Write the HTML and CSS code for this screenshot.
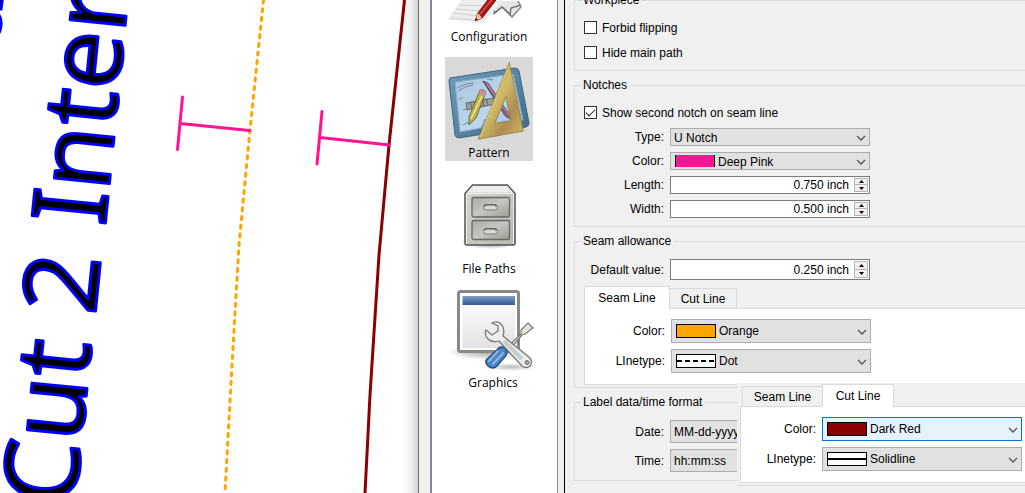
FILE: index.html
```html
<!DOCTYPE html>
<html lang="en">
<head>
<meta charset="utf-8">
<title>Pattern preferences</title>
<link rel="stylesheet" href="styles.css">
</head>
<body>
<svg class="defs" width="0" height="0" aria-hidden="true">
  <defs>
    <symbol id="chevron" viewBox="0 0 10 6"><path d="M1 1l4 4 4-4" fill="none" stroke="#555" stroke-width="1.3"/></symbol>
    <symbol id="up" viewBox="0 0 5 3"><path d="M0 3L2.500 0 5 3z" fill="#000"/></symbol>
    <symbol id="down" viewBox="0 0 5 3"><path d="M0 0L2.500 3 5 0z" fill="#000"/></symbol>
  </defs>
</svg>
<main class="app">
  <section class="canvas" aria-label="Pattern piece">
    <svg class="drawing" width="418" height="493" viewBox="0 0 418 493">
      <g class="piece-label">
        <text transform="translate(75 508) rotate(-84.3)">Cut</text>
        <text transform="translate(95 316) rotate(-84.3)">2</text>
        <text transform="translate(105 227) rotate(-84.3)">Inter</text>
      </g>
      <path d="M-4 -2H2.500L1 9H-4M-2 14C3 19 1 29-1 33" fill="#000" stroke="#00f" stroke-width="3"/>
      <path d="M263.500 0L250 130 239 245 232 365 225 493" fill="none" stroke="#ffa500" stroke-width="3" stroke-dasharray="3.200 5.500" stroke-linecap="round"/>
      <path d="M404.500 0L389 145 379 255 370 395 365 493" fill="none" stroke="#8b0000" stroke-width="3"/>
      <path d="M182.500 97L177.500 149.500M180 123.500L249.500 130.500M322 111.500L317 164M320 137.500L389.500 145" fill="none" stroke="#ff1493" stroke-width="3" stroke-linecap="round"/>
    </svg>
  </section>

  <nav class="sidebar" aria-label="Preference pages">
    <a class="page" href="#configuration">
      <svg width="88" height="86" viewBox="0 0 88 86">
        <path d="M43 60L50 72 57 66 64 72 67 76 76 66 73 60" fill="#e5e5e5" stroke="#888" stroke-width="1.500"/>
        <path d="M48 73L57 66 65 74 66 67 76 64" fill="none" stroke="#777" stroke-width="1.500"/>
        <path d="M14 62L3 79Q20 79 36 83L57 61V55H20z" fill="#eee"/>
        <path d="M14 64L40 65M11 68L37 70M8 72L34 75M5 77L29 79" stroke="#ccd0d4" fill="none"/>
        <path d="M30 80L33 72 46 55H54L37 77z" fill="#a81a1a" stroke="#700" stroke-width="1"/>
        <path d="M30 80L33 72 37 77z" fill="#e8c9a0"/><path d="M30 80L31 77 33 78.500z" fill="#222"/>
        <path d="M35 73L50 55" stroke="#e14b42" stroke-width="1.500"/>
      </svg>
      <span>Configuration</span>
    </a>
    <a class="page selected" href="#pattern" aria-current="page">
      <svg width="88" height="86" viewBox="0 0 88 86">
        <defs>
          <linearGradient id="board" x1="0" y1="0" x2="1" y2="1"><stop offset="0" stop-color="#6f9dbd"/><stop offset="1" stop-color="#416a88"/></linearGradient>
          <linearGradient id="sheet" x1="0" y1="0" x2="1" y2="1"><stop offset="0" stop-color="#a9c4dc"/><stop offset=".6" stop-color="#bdd8ee"/><stop offset="1" stop-color="#8cb8da"/></linearGradient>
          <linearGradient id="brass" x1="0" y1="0" x2="1" y2="1"><stop offset="0" stop-color="#b99b45"/><stop offset=".45" stop-color="#d3bb68"/><stop offset=".7" stop-color="#ae8d50"/><stop offset="1" stop-color="#d2b968"/></linearGradient>
        </defs>
        <path d="M5 21L70 11Q73 11 74 14L84 66Q84 69 81 70L14 81Q11 81 10 78L4 24Q4 22 5 21z" fill="url(#board)" stroke="#3d647f"/>
        <path d="M10 25L68 17 78 63 15 75z" fill="url(#sheet)" stroke="#82abc8"/>
        <path d="M12 31Q20 26 29 26M13 34Q20 29 28 28M42 22L48 23M14 43L18 40M18 53L37 47M18 68L31 61M35 75L40 62" stroke="#526b7c" stroke-width=".7" fill="none"/>
        <path d="M21 46L49 41 50 47 22 53z" fill="#9e9e97" stroke="#4b5454" stroke-width=".8"/>
        <path d="M25 45l2 7m2-8 2 7m2-8 2 7m2-8 2 7m2-8 2 7" stroke="#4d5554" stroke-width=".7"/>
        <path d="M38 24L43 26 64 57 65 62 60 59z" fill="#b97a8e" stroke="#454b65" stroke-width=".8"/>
        <path d="M38 24L63 60" stroke="#374266"/>
        <path d="M35 33Q39 31 41 35L31 61 24 68 24 60z" fill="#c1b24e" stroke="#58552d" stroke-width=".8"/>
        <path d="M35 33Q39 31 41 35L40 39 34 36z" fill="#c88c9e"/>
        <path d="M37 39L26 62" stroke="#eee58e" stroke-width="1.500"/>
        <path d="M64.300 5.300L33.300 82.300 78.300 74zM61 39.700L65.700 63.700 50 66.300z" fill="url(#brass)" fill-rule="evenodd" stroke="#8e7b3b" stroke-width=".8"/>
        <path d="M64 8L35 80" stroke="#e3d28c" stroke-width=".8"/>
      </svg>
      <span>Pattern</span>
    </a>
    <a class="page" href="#file-paths">
      <svg width="88" height="86" viewBox="0 0 88 86">
        <defs>
          <linearGradient id="steel" x1="0" y1="0" x2="1" y2="1"><stop offset="0" stop-color="#d5d8d0"/><stop offset="1" stop-color="#b7bab2"/></linearGradient>
          <linearGradient id="drawer" x1="0" y1="0" x2="1" y2="1"><stop offset="0" stop-color="#a9aca4"/><stop offset=".5" stop-color="#c4c7bf"/><stop offset="1" stop-color="#989c92"/></linearGradient>
          <radialGradient id="shade"><stop offset="0" stop-color="#777"/><stop offset="1" stop-color="#777" stop-opacity="0"/></radialGradient>
        </defs>
        <ellipse cx="45" cy="69" rx="29" ry="7" fill="url(#shade)"/>
        <path d="M27.500 12H62.500L70 20.500V70.500Q70 72 68.500 72H21.500Q20 72 20 70.500V20.500z" fill="url(#steel)" stroke="#555753" stroke-width="1.500"/>
        <path d="M28 13H62L68 19.500H22z" fill="#eeeeec"/>
        <path d="M21.500 71V20.500H68.500V71" fill="none" stroke="#eeeeec"/>
        <g fill="url(#drawer)" stroke="#666a62" stroke-width="1.300"><rect x="27" y="24.500" width="37.500" height="19.500" rx="1.500"/><rect x="27" y="47.500" width="37.500" height="19" rx="1.500"/></g>
        <g fill="#d8dad4" stroke="#777b72"><rect x="38.500" y="31.500" width="14" height="5.500" rx="2.500"/><rect x="38.500" y="55.500" width="14" height="5.500" rx="2.500"/></g>
        <path d="M40 34V32H51V34M40 58V56H51V58" fill="none" stroke="#555953"/>
      </svg>
      <span>File Paths</span>
    </a>
    <a class="page wide" href="#graphics">
      <svg width="96" height="84" viewBox="0 2 96 84">
        <defs>
          <linearGradient id="win" x2="0" y2="1"><stop offset="0" stop-color="#fff"/><stop offset="1" stop-color="#e2e2e2"/></linearGradient>
          <linearGradient id="bar" x2="0" y2="1"><stop offset="0" stop-color="#7f9dc6"/><stop offset="1" stop-color="#345b96"/></linearGradient>
        </defs>
        <ellipse cx="42" cy="65" rx="39" ry="8" fill="url(#shade)" opacity=".65"/>
        <ellipse cx="66" cy="80" rx="26" ry="4" fill="url(#shade)" opacity=".5"/>
        <rect x="13.500" y="4.500" width="60" height="60" rx="2" fill="#fff" stroke="#888a85" stroke-width="3"/>
        <rect x="17.500" y="9" width="52.500" height="52" fill="url(#win)"/>
        <rect x="17.500" y="9" width="52.500" height="9" fill="url(#bar)"/>
        <path d="M56 66L76 47 76 43 83 36 88 41 80 47 77 48 59 69z" fill="#e4e5df" stroke="#777972" stroke-width="1.200"/>
        <path d="M51 64Q55 58 60 61L62 65Q62 68 58 72L52 79Q48 83 43 79 39 75 42 72z" fill="#4a83c8" stroke="#204a87" stroke-width="1.300"/>
        <path d="M53 64L44 74M58 66L48 77" stroke="#91b5df" stroke-width="2" stroke-linecap="round"/>
        <path d="M47 36Q53 33 57 38 60 43 58 49L85 71Q88 75 85 79 81 82 77 79L54 54Q47 56 43 52 39 48 41 43L47 48 53 44 53 39z" fill="#eeeeec" stroke="#777972" stroke-width="1.300"/>
        <path d="M59 54L77 72" stroke="#c4cdd2" stroke-width="4"/>
        <circle cx="82" cy="75.500" r="2" fill="#aaa" stroke="#666"/>
      </svg>
      <span>Graphics</span>
    </a>
  </nav>

  <form class="settings">
    <fieldset class="group">
      <legend>Workpiece</legend>
      <div class="checks">
        <label class="check"><input type="checkbox">Forbid flipping</label>
        <label class="check"><input type="checkbox">Hide main path</label>
      </div>
    </fieldset>

    <fieldset class="group notches">
      <legend>Notches</legend>
      <div class="checks"><label class="check"><input type="checkbox" checked>Show second notch on seam line</label></div>
      <div class="rows compact">
        <label for="type">Type:</label>
        <div class="combo"><select id="type"><option>U Notch</option></select><svg class="chevron"><use href="#chevron"/></svg></div>
        <label for="notch-color">Color:</label>
        <div class="combo sampled"><select id="notch-color"><option>Deep Pink</option></select><span class="swatch pink"></span><svg class="chevron"><use href="#chevron"/></svg></div>
        <label for="length">Length:</label>
        <div class="spin"><input id="length" type="text" value="0.750 inch"><div class="steps"><button type="button" aria-label="Increase length"><svg><use href="#up"/></svg></button><button type="button" aria-label="Decrease length"><svg><use href="#down"/></svg></button></div></div>
        <label for="width">Width:</label>
        <div class="spin"><input id="width" type="text" value="0.500 inch"><div class="steps"><button type="button" aria-label="Increase width"><svg><use href="#up"/></svg></button><button type="button" aria-label="Decrease width"><svg><use href="#down"/></svg></button></div></div>
      </div>
    </fieldset>

    <fieldset class="group allowance">
      <legend>Seam allowance</legend>
      <div class="rows default">
        <label for="default">Default value:</label>
        <div class="spin"><input id="default" type="text" value="0.250 inch"><div class="steps"><button type="button" aria-label="Increase default value"><svg><use href="#up"/></svg></button><button type="button" aria-label="Decrease default value"><svg><use href="#down"/></svg></button></div></div>
      </div>
      <div class="tabs" role="tablist">
        <button class="tab active" type="button" role="tab" aria-selected="true">Seam Line</button>
        <button class="tab" type="button" role="tab" aria-selected="false">Cut Line</button>
      </div>
      <div class="pane rows" role="tabpanel">
        <label for="seam-color">Color:</label>
        <div class="combo sampled"><select id="seam-color"><option>Orange</option></select><span class="swatch orange"></span><svg class="chevron"><use href="#chevron"/></svg></div>
        <label for="seam-type">LInetype:</label>
        <div class="combo sampled"><select id="seam-type"><option>Dot</option></select><span class="swatch dotted"></span><svg class="chevron"><use href="#chevron"/></svg></div>
      </div>
    </fieldset>

    <fieldset class="group formats">
      <legend>Label data/time format</legend>
      <div class="rows medium">
        <label for="date">Date:</label>
        <div class="combo"><select id="date"><option>MM-dd-yyyy</option></select></div>
        <label for="time">Time:</label>
        <div class="combo"><select id="time"><option>hh:mm:ss</option></select></div>
      </div>
    </fieldset>

    <section class="inset" aria-label="Cut line settings">
      <div class="tabs" role="tablist">
        <button class="tab first" type="button" role="tab" aria-selected="false">Seam Line</button>
        <button class="tab active" type="button" role="tab" aria-selected="true">Cut Line</button>
      </div>
      <div class="pane rows" role="tabpanel">
        <label for="cut-color">Color:</label>
        <div class="combo sampled focused"><select id="cut-color"><option>Dark Red</option></select><span class="swatch red"></span><svg class="chevron"><use href="#chevron"/></svg></div>
        <label for="cut-type">LInetype:</label>
        <div class="combo sampled"><select id="cut-type"><option>Solidline</option></select><span class="swatch solid"></span><svg class="chevron"><use href="#chevron"/></svg></div>
      </div>
    </section>
  </form>
</main>
</body>
</html>
```
FILE: styles.css
```css
* { box-sizing: border-box; }
body {
  margin: 0;
  background: #f0f0f0;
  color: #000;
  font: 12px/14px "Liberation Sans", Arial, sans-serif;
}
.defs { position: absolute; }
.app {
  display: grid;
  grid-template-columns: 419fr 146px 460fr;
  height: 100vh;
  overflow: hidden;
}
.canvas {
  min-width: 0;
  overflow: hidden;
  border-right: 1px solid #6d6d6d;
  background: linear-gradient(to left, #d2d2d2, #f2f2f2 8px, #fff 17px);
}
.drawing { display: block; }
.piece-label {
  font: 103px "Noto Sans", sans-serif;
  fill: #000;
  stroke: #00f;
  stroke-width: 3px;
  stroke-linejoin: round;
}

.sidebar {
  display: flex;
  flex-direction: column;
  align-items: flex-start;
  gap: 12px;
  margin-left: 11px;
  margin-right: 7px;
  padding-left: 13px;
  border-left: 2px solid #828790;
  border-right: 1px solid #828790;
  background: #fff;
  position: relative;
  box-shadow: 6px 0 #f0f0f0, 7px 0 #000;
}
.page {
  display: flex;
  flex-direction: column;
  align-items: center;
  width: 88px;
  height: 104px;
  flex: none;
  color: #000;
  text-decoration: none;
  font: 12px/20px "Open Sans", "Noto Sans", sans-serif;
}
.page:first-child { margin-top: -59px; }
.page svg { flex: none; }
.wide { width: 96px; }
.selected { background: #d9d9d9; }

.settings {
  position: relative;
  min-width: 0;
  margin-top: -7px;
  padding-left: 9px;
  overflow: hidden;
}
.group {
  min-width: 0;
  margin: 0 -2px 7px 0;
  padding: 8px 0 5px 9px;
  border: 1px solid #dcdcdc;
}
.group legend {
  margin-left: -2px;
  padding: 0 3px 0 1px;
}
.notches, .formats { padding-bottom: 8px; }
.allowance { padding: 11px 0 2px 9px; }
.formats { padding-top: 11px; }
.check {
  display: flex;
  align-items: center;
  gap: 5px;
  height: 25px;
}
.check input {
  appearance: none;
  width: 13px;
  height: 13px;
  margin: 0;
  border: 1px solid #333;
  background: #fff;
}
.check input:checked::after {
  content: "";
  display: block;
  width: 8px;
  height: 4px;
  margin: 2px 1px;
  border-left: 1px solid #222;
  border-bottom: 1px solid #222;
  transform: rotate(-45deg);
}

.rows {
  display: grid;
  grid-template-columns: 80px 200px;
  grid-auto-rows: 24px;
  column-gap: 6px;
  row-gap: 6px;
  align-items: center;
}
.rows label { text-align: right; }
.compact {
  grid-auto-rows: 18px;
  padding-top: 3px;
}
.medium { grid-auto-rows: 23px; }
.default {
  grid-auto-rows: 21px;
  margin-bottom: 6px;
}
.combo, .spin {
  position: relative;
  display: flex;
  height: 100%;
}
select {
  appearance: none;
  width: 100%;
  height: 100%;
  padding: 0 3px;
  border: 1px solid #adadad;
  border-radius: 0;
  background: #e1e1e1;
  color: #000;
  font: inherit;
}
.sampled select { padding-left: 47px; }
.compact select { padding-top: 1px; }
.focused select {
  border-color: #0078d7;
  background: #e5f1fb;
}
.chevron {
  position: absolute;
  right: 4px;
  top: calc(50% - 2px);
  width: 10px;
  height: 6px;
  pointer-events: none;
}
.swatch {
  position: absolute;
  left: 5px;
  top: 5px;
  bottom: 5px;
  width: 40px;
  border: 1px solid #000;
  pointer-events: none;
}
.pink {
  top: 3px;
  bottom: 3px;
  border-width: 0 1px;
  background: #ff1493;
}
.orange { background: #ffa500; }
.red { background: #8b0000; }
.dotted {
  background: repeating-linear-gradient(to right, #000 0 5px, #fff 5px 8px) 0 center / 100% 2px no-repeat #fff;
}
.solid { background: linear-gradient(#000, #000) center / 100% 2px no-repeat #fff; }

.spin {
  padding: 1px;
  border: 1px solid #7a7a7a;
  background: #fff;
}
.spin input {
  flex: 1;
  min-width: 0;
  padding: 0 5px 0 0;
  border: 0;
  background: #fff;
  color: #000;
  font: inherit;
  text-align: right;
}
.steps {
  display: grid;
  grid-template-rows: 1fr 1fr;
  width: 14px;
}
.steps button {
  display: flex;
  align-items: center;
  justify-content: center;
  min-height: 0;
  padding: 0;
  border: 1px solid #b5b5b5;
  background: #f0f0f0;
}
.steps button + button { border-top: 0; }
.steps svg { width: 5px; height: 3px; }

.tabs {
  display: flex;
  align-items: flex-end;
}
.tab {
  height: 20px;
  min-width: 68px;
  margin-right: -1px;
  padding: 0 10px;
  border: 1px solid #dadada;
  border-bottom: 0;
  background: #f0f0f0;
  color: #000;
  font: inherit;
}
.tab.active {
  position: relative;
  height: 23px;
  min-width: 86px;
  margin-bottom: -1px;
  padding-bottom: 1px;
  background: #fff;
}
.pane {
  padding: 10px 0 11px;
  border: 1px solid #dadada;
  background: #fff;
}

.inset {
  position: absolute;
  top: 390px;
  right: 0;
  width: 288px;
  padding: 1px 0 2px 3px;
  overflow: hidden;
  border-bottom: 1px solid #dcdcdc;
  background: #f0f0f0;
}
.inset .pane {
  grid-template-columns: 75px 200px;
  margin-right: -2px;
}
.inset .first {
  min-width: 81px;
  margin-left: 2px;
}
.inset .active { min-width: 72px; }
```
